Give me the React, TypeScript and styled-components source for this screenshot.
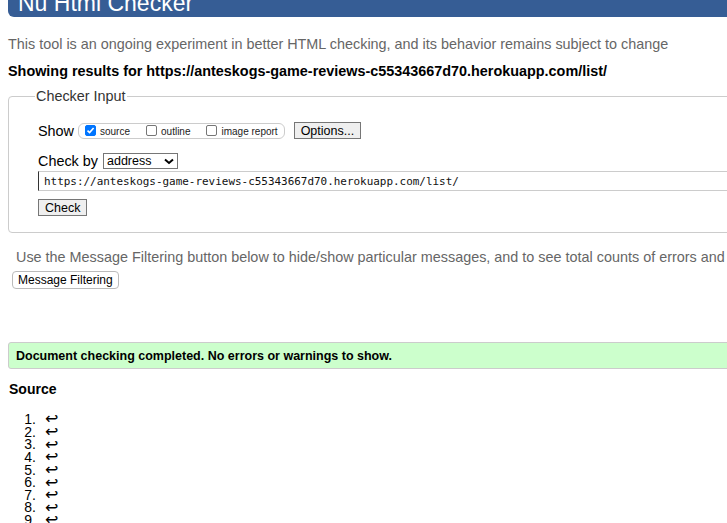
import React from "react";
import styled, { createGlobalStyle } from "styled-components";

const Global = createGlobalStyle`
  html, body {
    margin: 0;
    padding: 0;
    overflow: hidden;
    background: #fff;
  }
  body {
    padding: 0 8px;
    font-family: "Liberation Sans", Arial, sans-serif;
    color: #000;
  }
`;

const Page = styled.div`
  width: 790px;
`;

const Header = styled.header`
  margin-top: -30px;
  height: 47px;
  background: #365d95;
  border-radius: 0 0 0 6px;
  display: flex;
  align-items: flex-end;
  padding-left: 10px;
  overflow: hidden;
`;

const Title = styled.h1`
  margin: 0 0 -2px 0;
  font-size: 23px;
  font-weight: normal;
  color: #fff;
  line-height: 1;
  padding-bottom: 4px;
`;

const Intro = styled.p`
  margin: 18px 0 0 0;
  font-size: 14.4px;
  line-height: 18px;
  color: #666;
`;

const Results = styled.p`
  margin: 9px 0 0 0;
  font-size: 14.4px;
  line-height: 18px;
  font-weight: bold;
`;

const Fieldset = styled.fieldset`
  margin: 8px 0 0 0;
  padding: 10px 0 16px 29px;
  border: 1px solid #ccc;
  border-radius: 4px;
`;

const Legend = styled.legend`
  font-size: 14.4px;
  padding: 0 1px;
  margin-left: -3px;
  color: #333;
`;

const Row = styled.div<{ $mt?: number }>`
  display: flex;
  align-items: center;
  margin-top: ${(p) => p.$mt ?? 0}px;
  font-size: 14.4px;
`;

const Label = styled.span`
  margin-right: 4px;
`;

const CheckGroup = styled.div`
  display: flex;
  align-items: center;
  height: 14px;
  border: 1px solid #ccc;
  border-radius: 6px;
  padding: 0 6px 0 6px;
  margin-right: 9px;
  gap: 16px;
`;

const CheckItem = styled.label`
  display: flex;
  align-items: flex-end;
  font-size: 10px;
  line-height: 10px;
  color: #222;
`;

const Box = styled.span<{ $on?: boolean }>`
  width: 11px;
  height: 11px;
  border-radius: 2px;
  margin-right: 4px;
  box-sizing: border-box;
  border: 1px solid ${(p) => (p.$on ? "#0075ff" : "#767676")};
  background: ${(p) => (p.$on ? "#0075ff" : "#fff")};
  display: flex;
  align-items: center;
  justify-content: center;
  margin-bottom: 1px;
`;

const Button = styled.button`
  font-family: "Liberation Sans", Arial, sans-serif;
  font-size: 12.5px;
  color: #000;
  background: #efefef;
  border: 1px solid #767676;
  border-radius: 0;
  height: 17px;
  padding: 0 6px;
  line-height: 14px;
`;

const Select = styled.div`
  display: flex;
  align-items: center;
  justify-content: space-between;
  width: 75px;
  height: 16px;
  box-sizing: border-box;
  border: 1px solid #767676;
  padding: 0 3px 0 3px;
  font-size: 12.5px;
  margin-left: 1px;
`;

const UrlInput = styled.div`
  margin-top: 2px;
  height: 20px;
  box-sizing: border-box;
  border: 1px solid #ccc;
  border-left: 1px solid #333;
  display: flex;
  align-items: center;
  padding-left: 5px;
  font-family: "DejaVu Sans Mono", "Liberation Mono", monospace;
  font-size: 10.95px;
  color: #111;
`;

const Note = styled.p`
  margin: 15px 0 0 8px;
  font-size: 14.4px;
  line-height: 18px;
  color: #666;
`;

const FilterButton = styled.button`
  margin: 5px 0 0 4px;
  font-family: "Liberation Sans", Arial, sans-serif;
  font-size: 12px;
  background: #fff;
  border: 1px solid #bbb;
  border-radius: 4px;
  height: 18px;
  padding: 0 5px;
  color: #000;
`;

const Success = styled.div`
  margin-top: 53px;
  height: 27px;
  box-sizing: border-box;
  border: 1px solid #ccc;
  border-radius: 3px;
  background: #ccffcc;
  display: flex;
  align-items: center;
  padding-left: 7px;
  font-size: 12.5px;
  font-weight: bold;
`;

const Heading = styled.h2`
  margin: 12px 0 0 1px;
  font-size: 14px;
  font-weight: bold;
  line-height: 16px;
`;

const SourceList = styled.ol`
  margin: 16px 0 0 0;
  padding-left: 0;
  list-style: none;
  font-size: 14px;
  line-height: 12.65px;
`;

const Line = styled.li`
  display: flex;
  align-items: center;
  height: 12.65px;
`;

const Num = styled.span`
  width: 28px;
  text-align: right;
`;

const Arrow = styled.span`
  margin-left: 9px;
  font-family: "DejaVu Sans", sans-serif;
  font-size: 16px;
  line-height: 12px;
`;

function Check({ on, children }: { on?: boolean; children: React.ReactNode }) {
  return (
    <CheckItem>
      <Box $on={on}>
        {on && (
          <svg width="9" height="9" viewBox="0 0 9 9">
            <path d="M1.5 4.6 L3.6 6.6 L7.6 2" stroke="#fff" strokeWidth="1.6" fill="none" />
          </svg>
        )}
      </Box>
      {children}
    </CheckItem>
  );
}

export default function App() {
  return (
    <Page>
      <Global />
      <Header>
        <Title>Nu Html Checker</Title>
      </Header>
      <Intro>This tool is an ongoing experiment in better HTML checking, and its behavior remains subject to change</Intro>
      <Results>Showing results for https://anteskogs-game-reviews-c55343667d70.herokuapp.com/list/</Results>
      <Fieldset>
        <Legend>Checker Input</Legend>
        <Row $mt={8}>
          <Label>Show</Label>
          <CheckGroup>
            <Check on>source</Check>
            <Check>outline</Check>
            <Check>image report</Check>
          </CheckGroup>
          <Button>Options...</Button>
        </Row>
        <Row $mt={14}>
          <Label>Check by</Label>
          <Select>
            address
            <svg width="10" height="7" viewBox="0 0 10 7">
              <path d="M1 1.5 L5 5 L9 1.5" stroke="#000" strokeWidth="2" fill="none" />
            </svg>
          </Select>
        </Row>
        <UrlInput>https://anteskogs-game-reviews-c55343667d70.herokuapp.com/list/</UrlInput>
        <Row $mt={8}>
          <Button>Check</Button>
        </Row>
      </Fieldset>
      <Note>Use the Message Filtering button below to hide/show particular messages, and to see total counts of errors and warnings.</Note>
      <FilterButton>Message Filtering</FilterButton>
      <Success>Document checking completed. No errors or warnings to show.</Success>
      <Heading>Source</Heading>
      <SourceList>
        {Array.from({ length: 12 }, (_, i) => (
          <Line key={i}>
            <Num>{i + 1}.</Num>
            <Arrow>↩</Arrow>
          </Line>
        ))}
      </SourceList>
    </Page>
  );
}
